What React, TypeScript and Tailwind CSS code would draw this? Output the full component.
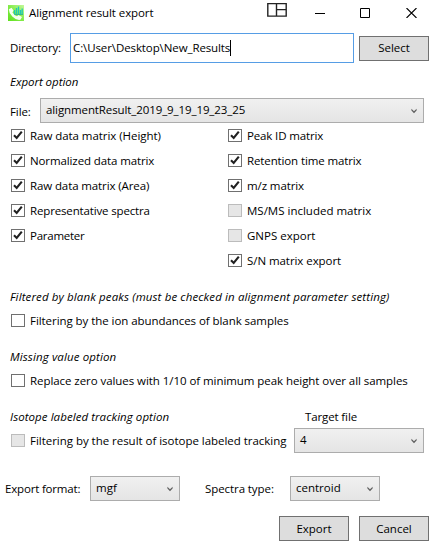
import type { ReactNode } from "react";

function Chevron() {
  return (
    <svg width="6" height="6" viewBox="0 0 6 6" className="shrink-0">
      <path d="M0.4 0.8V2.6L3 5.2L5.6 2.6V0.8L3 3.2Z" fill="#606060" />
    </svg>
  );
}

function Combo({ children, className }: { children: ReactNode; className: string }) {
  return (
    <div
      className={`flex h-[25px] items-center justify-between border border-[#acacac] bg-linear-to-b from-[#f0f0f0] to-[#e5e5e5] pr-[6px] pl-[5px] ${className}`}
    >
      <span className="-mt-[2px]">{children}</span>
      <Chevron />
    </div>
  );
}

function Button({ children }: { children: ReactNode }) {
  return (
    <button className="flex h-[25px] w-[70px] items-center justify-center border border-[#707070] bg-[#dddddd]">
      {children}
    </button>
  );
}

type CheckState = "on" | "off" | "disabled";

const boxStyles: Record<CheckState, string> = {
  on: "border-[#707070] bg-white",
  off: "-mt-px border-[#707070] bg-white",
  disabled: "border-[#bcbcbc] bg-[#e6e6e6]",
};

function Check({
  label,
  state,
  className = "",
  tracking = "",
}: {
  label: string;
  state: CheckState;
  className?: string;
  tracking?: string;
}) {
  return (
    <label className={`flex items-center ${className}`}>
      <span
        className={`mr-[5px] flex h-[13px] w-[14px] shrink-0 items-center justify-center border ${boxStyles[state]}`}
      >
        {state === "on" && (
          <svg width="12" height="11" viewBox="0 0 12 11">
            <path d="M2 5.2L4.7 8L9.8 1.6" fill="none" stroke="#212121" strokeWidth="2.1" />
          </svg>
        )}
      </span>
      <span className={tracking}>{label}</span>
    </label>
  );
}

const left: [string, CheckState, string][] = [
  ["Raw data matrix (Height)", "on", "tracking-[-0.05px]"],
  ["Normalized data matrix", "on", "tracking-[-0.11px]"],
  ["Raw data matrix (Area)", "on", "tracking-[-0.11px]"],
  ["Representative spectra", "on", "tracking-[-0.15px]"],
  ["Parameter", "on", "tracking-[-0.25px]"],
];

const right: [string, CheckState, string][] = [
  ["Peak ID matrix", "on", "tracking-[-0.14px]"],
  ["Retention time matrix", "on", "tracking-[-0.12px]"],
  ["m/z matrix", "on", "tracking-[-0.1px]"],
  ["MS/MS included matrix", "disabled", "tracking-normal"],
  ["GNPS export", "disabled", "tracking-normal"],
  ["S/N matrix export", "on", "tracking-[-0.06px]"],
];

export default function App() {
  return (
    <div className="flex h-[547px] w-[434px] flex-col bg-white font-['Open_Sans',sans-serif] text-[11.5px] leading-4 whitespace-nowrap text-black">
      <header className="flex h-[25px] items-center pl-2">
        <svg width="16" height="16" viewBox="0 0 16 16">
          <defs>
            <linearGradient id="leaf" x1="0" y1="1" x2="1" y2="0">
              <stop offset="0" stopColor="#5fe01e" />
              <stop offset="0.5" stopColor="#84ec4a" />
              <stop offset="1" stopColor="#c4f89c" />
            </linearGradient>
          </defs>
          <rect width="16" height="16" fill="url(#leaf)" />
          <path d="M6.5 9V5M8.5 9V3M10.5 9V1.5M12.5 9V5M14.2 9V3.5" stroke="#20c9b4" strokeWidth="1.3" />
          <path d="M6 9.5H15" stroke="#38b98c" strokeWidth="1" />
          <path
            d="M0.8 4.2L3.6 2.8L5.6 5.7L4.4 7.2Q6 10.3 9 11.3L10.5 10.1L14 12L12.4 14.8Q8.5 15.7 4.3 11.5Q0.8 8 0.8 4.2Z"
            fill="#f6fff2"
          />
        </svg>
        <span className="ml-[5px] w-[238px] tracking-[-0.09px]">Alignment result export</span>
        <svg width="20" height="15" viewBox="0 0 20 15" className="-mt-[6px]">
          <path d="M.8 1.6H19.2V14.1H.8ZM9.5 1.6V14.1M9.5 7.6H19" fill="none" stroke="#222" strokeWidth="1.4" />
        </svg>
        <svg width="10" height="10" viewBox="0 0 10 10" className="ml-7">
          <path d="M0 5.5H10" stroke="#000" />
        </svg>
        <svg width="10" height="10" viewBox="0 0 10 10" className="ml-[35px]">
          <path d="M.5 .5H9.5V9.5H.5Z" fill="none" stroke="#000" />
        </svg>
        <svg width="11" height="10" viewBox="0 0 11 10" className="ml-9">
          <path d="M.5 0L10.5 10M10.5 0L.5 10" stroke="#000" strokeWidth="1.1" />
        </svg>
      </header>

      <div className="mt-2 flex h-[30px] items-center pl-[10px]">
        <span className="w-[60px] tracking-[-0.15px]">Directory:</span>
        <div className="mr-[5px] flex h-[30px] w-[284px] items-center border border-[#569de5] pl-[2px]">
          <span className="tracking-[-0.1px]">C:\User\Desktop\New_Results</span>
          <span className="h-4 w-px bg-black" />
        </div>
        <Button>Select</Button>
      </div>

      <div className="mt-[11px] pl-[10px] tracking-[-0.04px] italic">Export option</div>

      <div className="mt-2 flex items-center pl-[10px]">
        <span className="mt-[3px] w-[30px] tracking-[-0.1px]">File:</span>
        <Combo className="w-[384px] tracking-[-0.1px]">alignmentResult_2019_9_19_19_23_25</Combo>
      </div>

      <div className="flex h-[150px] pl-[11px]">
        <div className="w-[217px]">
          {left.map(([label, state, tracking]) => (
            <Check key={label} label={label} state={state} tracking={tracking} className="h-[25px]" />
          ))}
        </div>
        <div>
          {right.map(([label, state, tracking]) => (
            <Check key={label} label={label} state={state} tracking={tracking} className="h-[25px]" />
          ))}
        </div>
      </div>

      <div className="mt-4 pl-[10px] tracking-[0.12px] italic">
        Filtered by blank peaks (must be checked in alignment parameter setting)
      </div>
      <Check
        label="Filtering by the ion abundances of blank samples"
        state="off"
        tracking="tracking-[-0.06px]"
        className="mt-2 h-4 pl-[11px]"
      />

      <div className="mt-5 pl-[10px] tracking-[0.12px] italic">Missing value option</div>
      <Check
        label="Replace zero values with 1/10 of minimum peak height over all samples"
        state="off"
        tracking="tracking-[-0.06px]"
        className="mt-2 h-4 pl-[11px]"
      />

      <div className="mt-5 flex pl-[10px]">
        <span className="w-[295px] tracking-[0.06px] italic">Isotope labeled tracking option</span>
        <span className="tracking-[-0.12px]">Target file</span>
      </div>
      <div className="mt-[3px] flex h-[25px] items-center pl-[11px]">
        <Check
          label="Filtering by the result of isotope labeled tracking"
          state="disabled"
          tracking="tracking-[-0.03px]"
          className="w-[283px]"
        />
        <Combo className="w-[130px]">4</Combo>
      </div>

      <div className="mt-[23px] flex h-[25px] items-center pl-[5px]">
        <span className="w-[85px] tracking-[-0.18px]">Export format:</span>
        <Combo className="w-[90px]">mgf</Combo>
        <span className="ml-[25px] w-[85px] tracking-[-0.08px]">Spectra type:</span>
        <Combo className="w-[90px]">centroid</Combo>
      </div>

      <div className="mt-[15px] flex justify-end gap-[10px] pr-[5px]">
        <Button>Export</Button>
        <Button>Cancel</Button>
      </div>
    </div>
  );
}
